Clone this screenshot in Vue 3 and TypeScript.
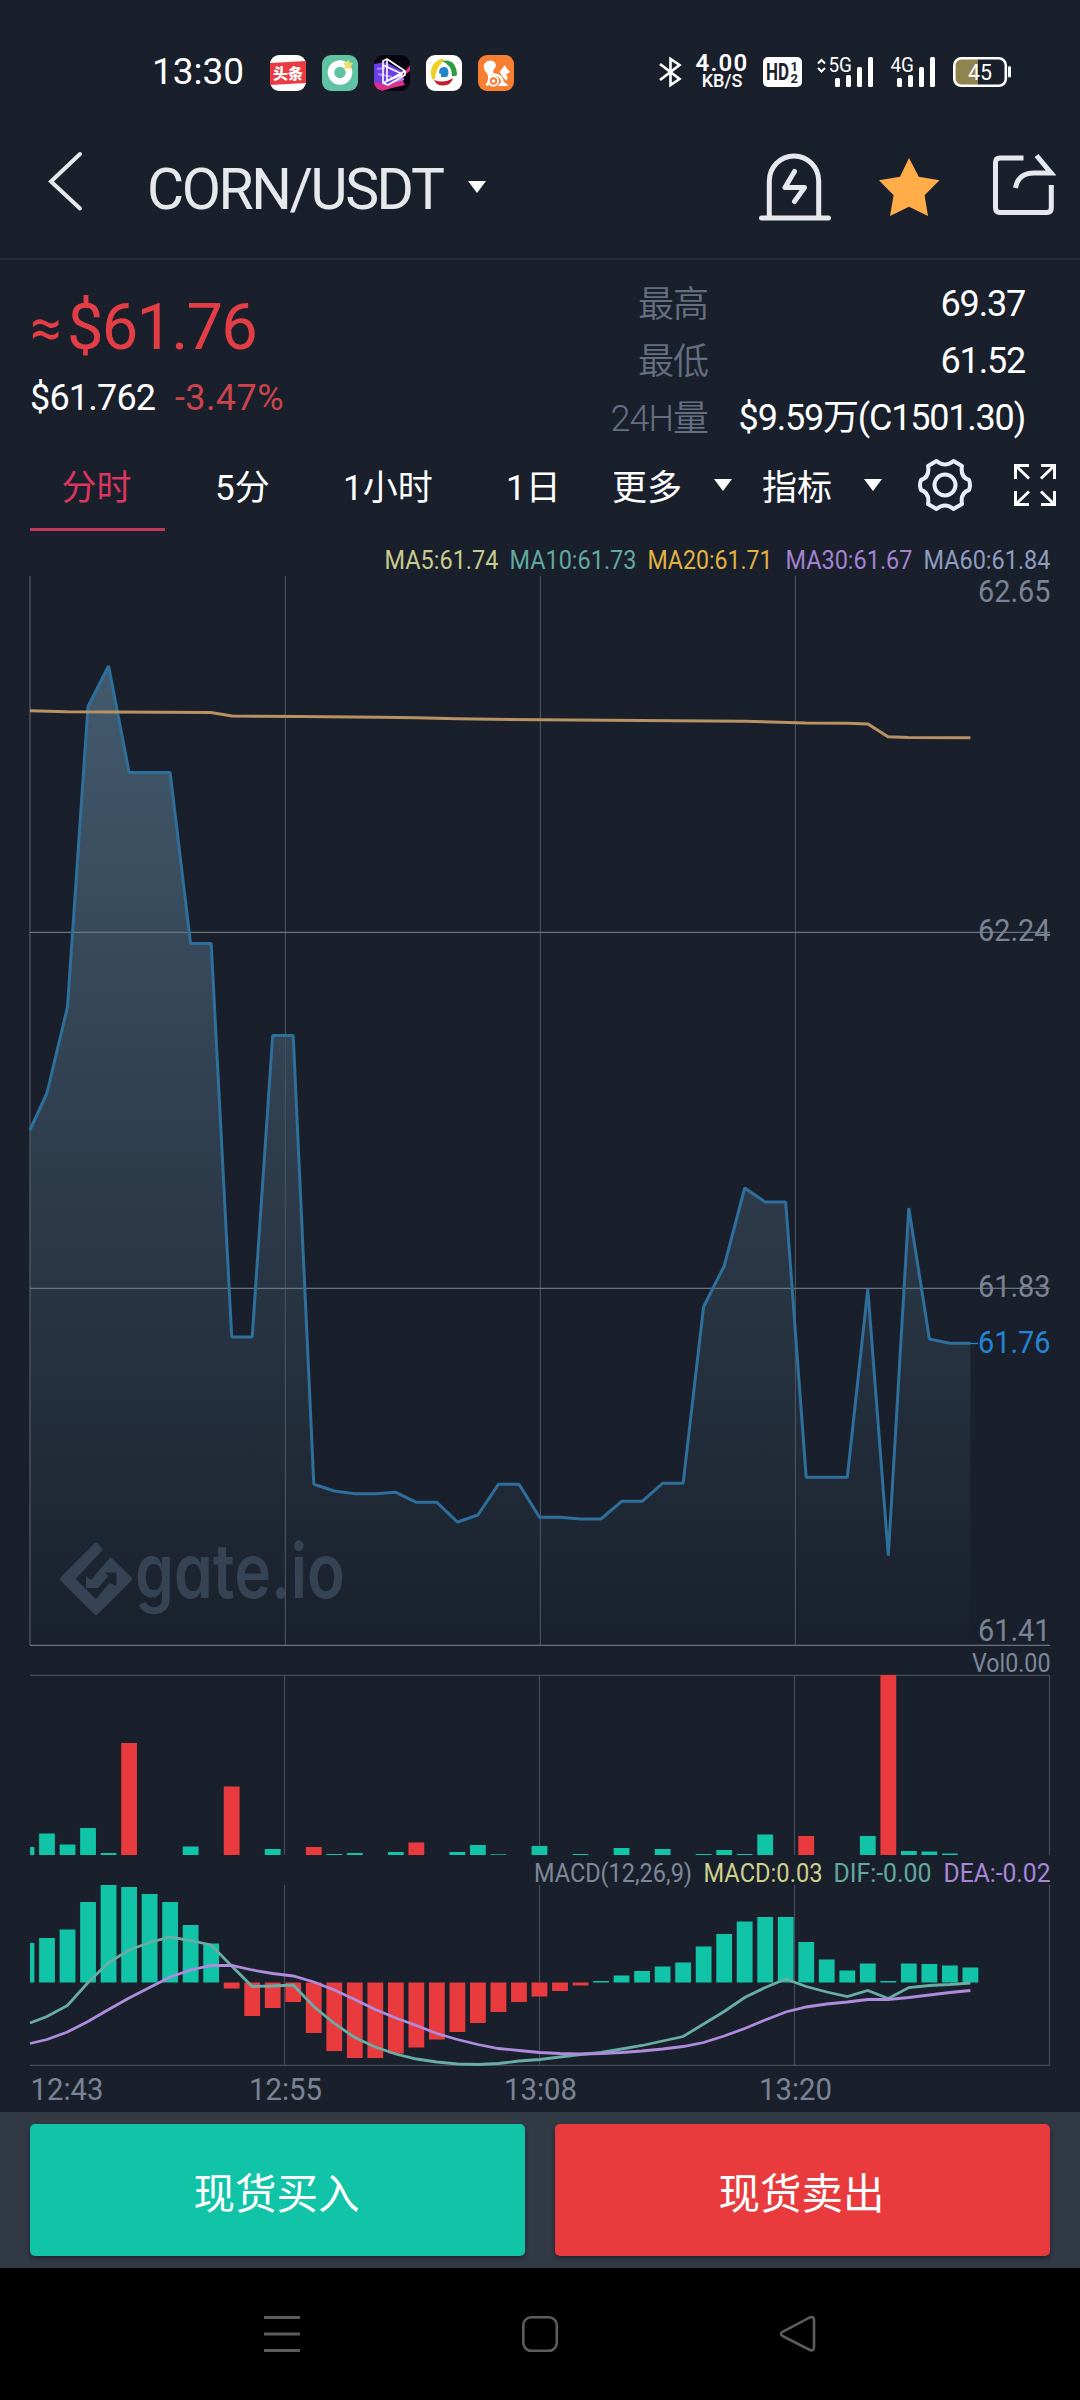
<script setup lang="ts">
interface Legend {
  text: string
  x: number
  width: number
  color: string
}

const step = 20.52
const xAt = (i: number): number => 47 + step * i

const prices: number[] = [
  1093, 1007, 706.5, 666, 772.5, 772.5, 772.5, 943.6, 943.6, 1337, 1337, 1035.5, 1035.5, 1484.3, 1491,
  1493.7, 1493.7, 1492.3, 1502.3, 1502.3, 1522, 1515, 1484.3, 1484.3, 1517.3, 1517.3, 1519, 1519, 1501.3,
  1501.3, 1483.3, 1483.3, 1306.7, 1266, 1188, 1202, 1202, 1477.3, 1477.3, 1477.3, 1289, 1555.7, 1208,
  1339, 1343.3, 1343.3,
]
const dif: number[] = [
  2016.5, 2005.5, 1982.5, 1962.5, 1950, 1942.5, 1937, 1940.5, 1945, 1966, 1986.5, 1986, 1985, 2006.5,
  2023.5, 2037.5, 2047, 2054, 2059, 2062, 2064, 2064.5, 2063.5, 2061, 2059.5, 2057, 2054.5, 2052.5, 2049,
  2045.5, 2041, 2036.5, 2024, 2011.5, 1997.5, 1987.5, 1979, 1986.5, 1992, 1996.5, 1990.5, 1998.5, 1987.5,
  1985.5, 1984.5, 1983,
]
const dea: number[] = [
  2039.5, 2032, 2021.5, 2009.5, 1998, 1987.5, 1977, 1970, 1965.5, 1965.5, 1970, 1973.5, 1976, 1982, 1990,
  1999.5, 2009.5, 2018, 2025.5, 2033.5, 2039.5, 2044.5, 2048.5, 2050.5, 2052.5, 2053.5, 2054, 2053.5,
  2052.5, 2051, 2049, 2046.5, 2042.5, 2036, 2028.5, 2020, 2012, 2007, 2004, 2002, 1999.5, 1999.5, 1997.5,
  1995, 1992.5, 1990.5,
]
const macd: number[] = [
  39.5, 44.5, 53, 80.5, 97.5, 95.5, 88.5, 80.5, 57.5, 39, -6, -33.5, -25.5, -19.5, -50.5, -68.5, -75.5,
  -75.5, -71, -65, -57, -49.5, -40.5, -29.5, -19.5, -14, -8.5, -3, 1.5, 7, 11.5, 16, 20, 36, 48.5, 61,
  65.5, 65.5, 40.5, 23, 12, 19, 1.5, 19, 18.5, 17, 15,
]
// Volume by candle index; negative means a falling candle.
const volumes: [number, number][] = [
  [-1, 8], [0, 21.5], [1, 10.5], [2, 27], [3, 2], [4, -112], [7, 8.5], [9, -68.5], [11, 6], [13, -8],
  [14, 1], [15, 2], [17, 3], [18, -12.5], [20, 3], [21, 10], [22, 0.7], [24, 9], [26, 1], [28, 7],
  [30, 6], [32, 1], [33, 5], [34, 1], [35, 20.5], [37, -19], [40, 19], [41, -180], [42, 4], [43, 3.5],
  [44, 1.5],
]

const toPoints = (start: number, ys: number[]): string =>
  [`30,${start}`, ...ys.map((y, i) => `${xAt(i).toFixed(1)},${y}`)].join(' ')

const priceLine = toPoints(1130, prices)
const priceArea = `${priceLine} 970.4,1645 30,1645`
const difLine = toPoints(2023, dif)
const deaLine = toPoints(2043.5, dea)
const avgLine =
  '30,710.7 67,711.8 211,712.6 232,716 300,716.6 380,717.2 416,717.8 457,718.8 540,719.8 640,720.6 745,721.2 806,723 847,723.2 868,724 888,736.8 908,737.4 970.4,737.8'

const gridX = [285, 540, 795]
const subGridX = [284.5, 539.5, 794.5, 1049.5]

const maLegend: Legend[] = [
  { text: 'MA5:61.74', x: 384.5, width: 114, color: '#c9cb8d' },
  { text: 'MA10:61.73', x: 509.5, width: 127, color: '#62a99f' },
  { text: 'MA20:61.71', x: 647.5, width: 125, color: '#e3b341' },
  { text: 'MA30:61.67', x: 785.5, width: 127, color: '#a582d2' },
  { text: 'MA60:61.84', x: 923.5, width: 127, color: '#8f9dc0' },
]
const macdLegend: Legend[] = [
  { text: 'MACD(12,26,9)', x: 534, width: 158, color: '#7f879a' },
  { text: 'MACD:0.03', x: 703.5, width: 119, color: '#cfd08c' },
  { text: 'DIF:-0.00', x: 833.5, width: 98, color: '#62a99f' },
  { text: 'DEA:-0.02', x: 943.5, width: 107, color: '#a986d8' },
]
const scale = [
  { text: '62.65', y: 602 },
  { text: '62.24', y: 941 },
  { text: '61.83', y: 1297 },
  { text: '61.41', y: 1641 },
]
const times = [
  { text: '12:43', x: 30.5 },
  { text: '12:55', x: 249 },
  { text: '13:08', x: 504 },
  { text: '13:20', x: 759 },
]
</script>

<template>
  <div class="screen">
    <div class="status">
      <span class="clock">13:30</span>
      <div class="apps">
        <svg width="36" height="36" viewBox="0 0 36 36">
          <rect width="36" height="36" rx="9" fill="#fff" />
          <path d="M0 8 L36 6 V28 L0 30Z" fill="#ea3b43" />
          <text x="18" y="23.500" text-anchor="middle" class="toutiao">头条</text>
        </svg>
        <svg width="36" height="36" viewBox="0 0 36 36">
          <rect width="36" height="36" rx="9" fill="#5fc3a4" />
          <circle cx="18" cy="17.500" r="9" fill="none" stroke="#fff" stroke-width="6.500" />
          <path d="M26 4 L27.500 7.500 L31 8 L29 11 L30 14.500 L26 13 L22.500 14.500 L23 10.500 L21 7.500 L25 7.500Z" fill="#f3dc6a" />
        </svg>
        <svg width="36" height="36" viewBox="0 0 36 36">
          <defs><clipPath id="round"><rect width="36" height="36" rx="9" /></clipPath></defs>
          <g clip-path="url(#round)">
            <rect width="36" height="36" fill="#08040f" />
            <path d="M0 9 L12 7 L30 17 L29 26 L16 33 L0 28Z" fill="#6a3fe8" />
            <path d="M0 27 L14 30 L24 25 L36 16 V10 L27 22 L31 30 L18 33 L8 36 L0 33Z" fill="#d8318c" />
            <path d="M3 14 L11 13 M4 19 L18 22 M18 27 L30 24" stroke="#a78bff" stroke-width="2" />
          </g>
          <g fill="none" stroke="#fff" stroke-width="1.600" stroke-linejoin="round">
            <path d="M9 6 L13 4 L31 16 V20 L14 30 L9 28Z" />
            <path d="M13 4 V26 L31 16 M9 10 L28 19 L9 28 M13 26 L28 20" />
          </g>
        </svg>
        <svg width="36" height="36" viewBox="0 0 36 36">
          <rect width="36" height="36" rx="9" fill="#fff" />
          <path d="M16.500 5 A13 13 0 0 0 7.500 23.500 Q9 12 16.500 5Z" fill="#f0cf1f" stroke="#f0cf1f" stroke-width="2.500" stroke-linejoin="round" />
          <path d="M16 6 Q30 3 31 20 Q28 22 26 21 Q26 10 16 6Z" fill="#2f9a3f" />
          <path d="M8 25 Q18 29 27 23 Q25 31 16 30.500 Q10 30 8 25Z" fill="#c51d2b" />
          <path d="M13 18 Q13 11 19 12 Q23 13 22.500 19 L21 22 H15 L15 19Z" fill="#1e86c6" />
        </svg>
        <svg width="36" height="36" viewBox="0 0 36 36">
          <rect width="36" height="36" rx="9" fill="#f77f32" />
          <g fill="#fff">
            <path d="M7.500 30 Q12 24 9 18.500 Q4 13 6.500 8.500 Q10 4 15 6 Q19.500 9 17 13 Q14 16 16 19 Q12 21 10.500 31Z" />
            <path d="M21.500 17 L25 12.500 L27 10 L28 12.500 L32 17 L28 19.500 L30 23 L28 25.500 L24.500 21.500Z" />
            <path d="M20 31 L22.500 27.500 H27 L30.500 31Z" />
          </g>
          <path d="M15 19.500 Q24 19 25 29" fill="none" stroke="#fff" stroke-width="2.600" />
          <circle cx="15.500" cy="26" r="4.600" fill="#f77f32" stroke="#fff" stroke-width="1.800" />
          <circle cx="15.500" cy="26" r="1.800" fill="#fff" />
        </svg>
      </div>
      <div class="system">
        <svg width="24" height="32" viewBox="658 56 24 32" fill="none" stroke="#fff" stroke-width="2.600">
          <path d="M660 64 L679.500 79 L670.500 85 V59 L679.500 65 L660 80" />
        </svg>
        <div class="speed"><span class="rate">4.00</span><span class="unit">KB/S</span></div>
        <svg class="hd" width="39" height="30" viewBox="763 57 39 30">
          <rect x="763" y="57" width="39" height="30" rx="5" fill="#fff" />
          <text x="766" y="80" textLength="23" lengthAdjust="spacingAndGlyphs" class="hd-text">HD</text>
          <text x="790.500" y="71" class="hd-small">1</text>
          <text x="790.500" y="83" class="hd-small">2</text>
        </svg>
        <svg class="sig" width="58" height="40" viewBox="816 48 58 40">
          <path d="M818 63.500 L821.500 60 L825 63.500 M818 68 L821.500 71.500 L825 68" fill="none" stroke="#fff" stroke-width="2" />
          <text x="828.500" y="72" textLength="23.500" lengthAdjust="spacingAndGlyphs" class="gen">5G</text>
          <g fill="#fff">
            <rect x="835" y="78" width="5" height="9" rx="1.500" /><rect x="846" y="75" width="5" height="12" rx="1.500" />
            <rect x="857" y="67" width="5" height="20" rx="1.500" /><rect x="868" y="57" width="5" height="30" rx="1.500" />
          </g>
        </svg>
        <svg class="sig sig2" width="46" height="40" viewBox="890 48 46 40">
          <text x="890.500" y="72" textLength="23.500" lengthAdjust="spacingAndGlyphs" class="gen">4G</text>
          <g fill="#fff">
            <rect x="897" y="78" width="5" height="9" rx="1.500" /><rect x="908" y="75" width="5" height="12" rx="1.500" />
            <rect x="919" y="67" width="5" height="20" rx="1.500" /><rect x="930" y="57" width="5" height="30" rx="1.500" />
          </g>
        </svg>
        <svg class="battery" width="60" height="32" viewBox="952 56 60 32">
          <path d="M978 59 H962 Q955 59 955 66 V78 Q955 85 962 85 H978Z" fill="#8f8350" />
          <rect x="954.300" y="58.300" width="51.500" height="27.500" rx="7" fill="none" stroke="#fff" stroke-width="2.600" />
          <rect x="1008" y="66" width="3" height="11.500" rx="1.500" fill="#fff" />
          <text x="968" y="79.500" textLength="24" lengthAdjust="spacingAndGlyphs" class="pct">45</text>
        </svg>
      </div>
    </div>

    <header class="header">
      <svg class="back" width="36" height="62" viewBox="48 150 36 62" fill="none" stroke="#e6e8ec" stroke-width="4" stroke-linecap="round">
        <path d="M80 154 L51 181.500 L80 208.500" />
      </svg>
      <h1 class="pair">CORN/USDT</h1>
      <svg class="pair-caret" width="18" height="12" viewBox="0 0 18 12"><path d="M0 0 H18 L9 12Z" fill="#fff" /></svg>
      <div class="actions">
        <svg width="74" height="72" viewBox="758 151 74 72" fill="none" stroke="#e6e8ee" stroke-width="5" stroke-linecap="round" stroke-linejoin="round">
          <path d="M761.500 218 H828.500" />
          <path d="M769.300 217 V181 A24.700 25 0 0 1 818.700 181 V217" />
          <path d="M794.500 171.500 L785 187.500 H804.500 L794.500 201.500" />
        </svg>
        <svg width="61" height="72" viewBox="879 151 61 72">
          <path d="M909 158 L918.800 176.700 L939.500 180.300 L924.600 195.300 L928 216 L909 206.700 L890 216 L893.600 195.300 L879 180.300 L900 176.700Z" fill="#ffac49" />
        </svg>
        <svg width="64" height="72" viewBox="992 151 64 72" fill="none" stroke="#e6e8ee" stroke-width="5">
          <path d="M1023.500 158 H1000 Q995.500 158 995.500 162.500 V207.500 Q995.500 212.500 1000 212.500 H1047 Q1051.300 212.500 1051.300 208 V185" />
          <path d="M1015.500 188 Q1018 173 1034 173 H1051 L1036.500 155.500" />
        </svg>
      </div>
    </header>

    <section class="ticker">
      <div class="ticker-main">
        <div class="last"><span class="approx">≈</span><span class="amount">$61.76</span></div>
        <div class="sub"><span class="usd">$61.762</span><span class="change">-3.47%</span></div>
      </div>
      <dl class="stats">
        <div><dt>最高</dt><dd>69.37</dd></div>
        <div><dt>最低</dt><dd>61.52</dd></div>
        <div><dt>24H量</dt><dd>$9.59万(C1501.30)</dd></div>
      </dl>
    </section>

    <nav class="tabs">
      <span class="tab active">分时</span>
      <span class="tab t5">5分</span>
      <span class="tab t60">1小时</span>
      <span class="tab t1d">1日</span>
      <span class="tab more">更多</span>
      <svg class="caret" width="18" height="12" viewBox="0 0 18 12"><path d="M0 0 H18 L9 12Z" fill="#fff" /></svg>
      <span class="tab index">指标</span>
      <svg class="caret" width="18" height="12" viewBox="0 0 18 12"><path d="M0 0 H18 L9 12Z" fill="#fff" /></svg>
      <svg class="gear" width="56" height="56" viewBox="917 457 56 56" fill="none" stroke="#e9edfb" stroke-width="4" stroke-linejoin="round">
        <path d="M936.500 461 Q945 468 953.500 461 L962 466 Q960 477 969 480 Q971 485 969 490 Q960 493 962 504 L953.500 509 Q945 502 936.500 509 L928 504 Q930 493 921 490 Q919 485 921 480 Q930 477 928 466Z" />
        <circle cx="945" cy="485" r="10.500" />
      </svg>
      <svg class="expand" width="42" height="42" viewBox="1014 464 42 42" fill="none" stroke="#fff" stroke-width="3">
        <path d="M1015.500 479 V465.500 H1029 M1016 466 L1029 478.500" />
        <path d="M1041 465.500 H1054.500 V479 M1054 466 L1041 478.500" />
        <path d="M1015.500 491 V504.500 H1029 M1016 504 L1029 491.500" />
        <path d="M1041 504.500 H1054.500 V491 M1054 504 L1041 491.500" />
      </svg>
    </nav>

    <svg class="chart" width="1080" height="1108" viewBox="0 540 1080 1108">
      <defs>
        <linearGradient id="area" gradientUnits="userSpaceOnUse" x1="0" y1="666" x2="0" y2="1645">
          <stop offset="0" stop-color="#435a6d" />
          <stop offset="1" stop-color="#435a6d" stop-opacity="0" />
        </linearGradient>
      </defs>
      <text v-for="m in maLegend" :key="m.text" :x="m.x" y="569" :textLength="m.width" lengthAdjust="spacingAndGlyphs" :fill="m.color" class="legend">{{ m.text }}</text>
      <polygon :points="priceArea" fill="url(#area)" />
      <g fill="#364355">
        <path d="M94.500 1543.600 Q96 1542 97.500 1543.600 L103 1549.500 L75.700 1579 L96 1599 L109.500 1583 L116.500 1586 V1572.500 H104.500 L108.500 1576 L98 1588 H86 V1576 L91 1580 L110.500 1557 L131.500 1577.500 Q133 1579 131.500 1580.500 L97.500 1614.500 Q96 1616 94.500 1614.500 L60.500 1580.500 Q59 1579 60.500 1577.500Z" />
        <text x="135" y="1598" textLength="210" lengthAdjust="spacingAndGlyphs" class="brand">gate.io</text>
      </g>
      <g stroke="#48505c" stroke-width="1.200">
        <line x1="30" x2="30" y1="576" y2="1645" stroke="#555d69" />
        <line v-for="x in gridX" :key="x" :x1="x + 0.4" :x2="x + 0.4" y1="576" y2="1645" />
      </g>
      <g stroke="#6b737f" stroke-width="1.200">
        <line x1="30" x2="1050" y1="932.400" y2="932.400" />
        <line x1="30" x2="1050" y1="1288.400" y2="1288.400" />
        <line x1="30" x2="1050" y1="1645.400" y2="1645.400" />
      </g>
      <polyline :points="priceLine" fill="none" stroke="#2e6f9b" stroke-width="3" stroke-linejoin="bevel" />
      <line x1="970" x2="978" y1="1343.500" y2="1343.500" stroke="#2385d8" stroke-width="1.300" />
      <polyline :points="avgLine" fill="none" stroke="#b99363" stroke-width="3" />
      <text v-for="s in scale" :key="s.text" x="978" :y="s.y" textLength="72.500" lengthAdjust="spacingAndGlyphs" class="axis">{{ s.text }}</text>
      <text x="978" y="1353" textLength="72.500" lengthAdjust="spacingAndGlyphs" class="axis current">61.76</text>
    </svg>

    <svg class="chart" width="1080" height="209" viewBox="0 1648 1080 209">
      <defs><clipPath id="plot"><rect x="30" y="1600" width="1020" height="500" /></clipPath></defs>
      <text x="972" y="1672" textLength="78.500" lengthAdjust="spacingAndGlyphs" class="legend" fill="#7f879a">Vol0.00</text>
      <g stroke="#454d5a" stroke-width="1.200">
        <line x1="30" x2="1050" y1="1675.400" y2="1675.400" />
        <line v-for="x in subGridX" :key="x" :x1="x" :x2="x" y1="1675" y2="1855" />
      </g>
      <g clip-path="url(#plot)">
        <rect v-for="[i, v] in volumes" :key="i" :x="xAt(i) - 7.9" :y="1855 - Math.abs(v)" width="15.800" :height="Math.abs(v)" :fill="v < 0 ? '#e93b3d' : '#11c3a7'" />
      </g>
    </svg>

    <svg class="chart" width="1080" height="255" viewBox="0 1857 1080 255">
      <text v-for="m in macdLegend" :key="m.text" :x="m.x" y="1882" :textLength="m.width" lengthAdjust="spacingAndGlyphs" :fill="m.color" class="legend">{{ m.text }}</text>
      <g stroke="#454d5a" stroke-width="1.200">
        <line x1="30" x2="1050" y1="2065.400" y2="2065.400" />
        <line v-for="x in subGridX" :key="x" :x1="x" :x2="x" y1="1885" y2="2065" />
      </g>
      <g clip-path="url(#plot)">
        <rect v-for="(v, i) in macd" :key="i" :x="xAt(i - 1) - 7.9" :y="v > 0 ? 1982.500 - v : 1982.500" width="15.800" :height="Math.abs(v)" :fill="v < 0 ? '#e93b3d' : '#11c3a7'" />
      </g>
      <polyline :points="difLine" fill="none" stroke="#68aea6" stroke-width="2.800" />
      <polyline :points="deaLine" fill="none" stroke="#af8cdd" stroke-width="2.800" />
      <text v-for="t in times" :key="t.text" :x="t.x" y="2100" textLength="73" lengthAdjust="spacingAndGlyphs" class="axis">{{ t.text }}</text>
    </svg>

    <footer class="trade">
      <button class="buy">现货买入</button>
      <button class="sell">现货卖出</button>
    </footer>

    <div class="navbar">
      <svg width="38" height="38" viewBox="263 2315 38 38" stroke="#5c5c5c" stroke-width="3">
        <path d="M264 2317.500 H300 M264 2334 H300 M264 2350.500 H300" />
      </svg>
      <svg width="38" height="38" viewBox="521 2315 38 38" fill="none" stroke="#5c5c5c" stroke-width="2.600">
        <rect x="523.300" y="2317.300" width="33.500" height="33.500" rx="8" />
      </svg>
      <svg width="38" height="38" viewBox="779 2315 38 38" fill="none" stroke="#5c5c5c" stroke-width="2.600" stroke-linejoin="round">
        <path d="M782.500 2331.800 L809 2317.800 Q814 2315.500 814 2320 V2347 Q814 2352 809 2349.500 L782.500 2336 Q779.500 2334 782.500 2331.800Z" />
      </svg>
    </div>
  </div>
</template>

<style>
body {
  background: #19202c;
}
</style>

<style scoped>
.screen {
  width: 1080px;
  height: 2400px;
  overflow: hidden;
  display: flex;
  flex-direction: column;
  background: #19202c;
  color: #fff;
  font-family: Roboto, 'Noto Sans CJK SC', sans-serif;
}
svg {
  display: block;
  flex: none;
}
.status {
  height: 120px;
  flex: none;
  display: flex;
  box-sizing: border-box;
  padding: 50px 0 0 152px;
}
.clock {
  width: 118px;
  font-size: 37px;
  line-height: 44px;
}
.apps {
  display: flex;
  gap: 16px;
  padding-top: 5px;
}
.toutiao {
  font-size: 15px;
  font-weight: 900;
  fill: #fff;
  font-family: 'Noto Sans CJK SC', sans-serif;
}
.system {
  display: flex;
  padding-top: 6px;
  margin-left: 144px;
}
.speed {
  width: 56px;
  margin: -3px 0 0 12px;
  display: flex;
  flex-direction: column;
  align-items: center;
}
.rate {
  font-size: 24px;
  line-height: 20px;
  font-weight: 600;
  letter-spacing: 1.2px;
}
.unit {
  font-size: 18px;
  line-height: 16px;
  font-weight: 500;
}
.hd {
  margin: 1px 0 0 13px;
}
.hd-text {
  font-size: 23px;
  font-weight: 700;
  fill: #19202c;
}
.hd-small {
  font-size: 13px;
  font-weight: 700;
  fill: #19202c;
}
.sig {
  margin: -8px 0 0 14px;
}
.gen {
  font-size: 20px;
  fill: #fff;
}
.sig2 {
  margin-left: 16px;
}
.battery {
  margin-left: 16px;
}
.pct {
  font-size: 22px;
  fill: #fff;
}
.header {
  height: 140px;
  flex: none;
  box-sizing: border-box;
  border-bottom: 2px solid #262d39;
  display: flex;
  padding-left: 48px;
}
.back {
  margin-top: 30px;
}
.pair {
  margin: 36px 0 0 63px;
  width: 321px;
  font-size: 57px;
  line-height: 67px;
  font-weight: 400;
  letter-spacing: -2.4px;
  color: #e6e8ec;
}
.pair-caret {
  margin-top: 61px;
}
.actions {
  display: flex;
  margin: 31px 24px 0 auto;
}
.actions svg + svg {
  margin-left: 47px;
}
.actions svg:last-child {
  margin-left: 52px;
}
.ticker {
  height: 185px;
  flex: none;
  display: flex;
  justify-content: space-between;
  padding: 0 55px 0 30px;
}
.last {
  display: flex;
  margin-top: 28px;
  height: 77px;
  color: #e33e46;
  font-size: 65px;
  line-height: 78px;
}
.approx {
  width: 37px;
  font-size: 56px;
  line-height: 80px;
}
.amount {
  letter-spacing: -1.8px;
}
.sub {
  display: flex;
  margin-top: 12px;
  font-size: 36px;
  line-height: 42px;
}
.usd {
  width: 145px;
  letter-spacing: -0.8px;
}
.change {
  color: #cb444d;
  letter-spacing: 0.4px;
}
.stats {
  margin: 16px 0 0;
  font-size: 36px;
}
.stats div {
  display: flex;
  height: 57px;
  line-height: 57px;
  justify-content: flex-end;
}
.stats dt {
  padding-top: 1px;
  color: #666e81;
  font-weight: 350;
  letter-spacing: -1px;
}
.stats dd {
  margin: 0;
  width: 317px;
  text-align: right;
  font-size: 36px;
  letter-spacing: -1.2px;
}
.tabs {
  height: 95px;
  flex: none;
  display: flex;
  padding-left: 30px;
  font-size: 35px;
}
.tab {
  height: 86px;
  line-height: 88px;
  white-space: nowrap;
}
.active {
  box-sizing: border-box;
  width: 135px;
  text-indent: -2px;
  text-align: center;
  color: #dc3560;
  border-bottom: 3px solid #c2385a;
}
.t5 {
  margin-left: 50px;
  width: 128px;
}
.t60 {
  width: 163px;
}
.t1d {
  width: 106px;
}
.more {
  width: 102px;
}
.index {
  margin-left: 30px;
  width: 102px;
}
.caret {
  margin-top: 34px;
}
.gear {
  margin: 12px 0 0 35px;
}
.expand {
  margin: 19px 0 0 41px;
}
.legend {
  font-size: 25px;
}
.axis {
  font-size: 31px;
  fill: #7b8395;
}
.current {
  fill: #2385d8;
}
.brand {
  font-family: Inter, sans-serif;
  font-feature-settings: 'cv11';
  font-size: 76px;
  font-weight: 600;
}
.trade {
  height: 156px;
  flex: none;
  box-sizing: border-box;
  padding: 12px 30px;
  display: flex;
  gap: 30px;
  background: #323a46;
}
.trade button {
  flex: 1;
  border: 0;
  padding: 2px 2px 0 0;
  border-radius: 5px;
  color: #fff;
  font: 400 41.5px 'Noto Sans CJK SC', sans-serif;
  box-shadow: 0 3px 5px rgba(10, 14, 24, 0.45);
}
.buy {
  background: #11c3a7;
}
.sell {
  background: #e93b3d;
}
.navbar {
  height: 132px;
  flex: none;
  box-sizing: border-box;
  background: #000;
  display: flex;
  gap: 220px;
  padding: 47px 0 0 263px;
}
</style>
